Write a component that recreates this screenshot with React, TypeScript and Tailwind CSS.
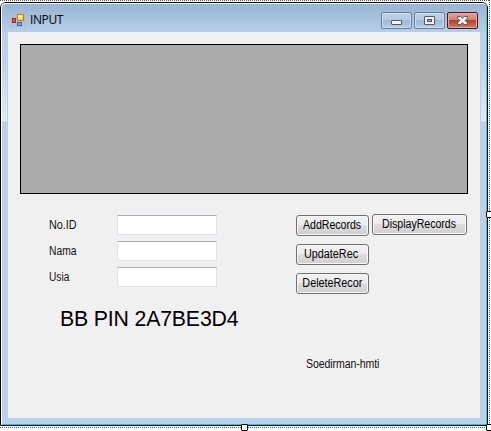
import React from "react";

function WinButton({ label, className, textClass }: { label: string; className: string; textClass: string }) {
  return (
    <button
      className={`flex h-[21px] items-center justify-center whitespace-nowrap rounded-[3px] border border-[#707070] bg-[linear-gradient(to_bottom,#f2f2f2_0%,#ebebeb_48%,#dddddd_50%,#cfcfcf_100%)] text-[12px] leading-[19px] shadow-[inset_0_0_0_1px_#f8f8f8] ${className}`}
    >
      <span className={`inline-block ${textClass}`}>{label}</span>
    </button>
  );
}

function Field({ label, textClass }: { label: string; textClass: string }) {
  return (
    <label className="flex h-5 items-center">
      <span className={`w-[68px] origin-left text-[12px] leading-5 text-[#111] ${textClass}`}>{label}</span>
      <input className="h-5 w-[100px] rounded-[1px] border border-[#e2e3ea] border-t-[#abadb3] bg-white" />
    </label>
  );
}

function AppIcon() {
  return (
    <svg width="14" height="14" viewBox="0 0 14 14" className="shrink-0">
      <path d="M.5 .5h13v13H.5z" fill="none" stroke="#b5b8bd" strokeOpacity=".8" />
      <path d="M5.5 .5v13M.5 8.5h13" stroke="#b5b8bd" />
      <rect x="6.5" y="1.5" width="6" height="6" fill="#fbd04c" stroke="#b8841c" />
      <path d="M7 2h4v3H7z" fill="#ffeb9c" />
      <rect x="1.5" y="5.5" width="3" height="4" fill="#e66049" stroke="#9d2418" />
      <rect x="6.5" y="9.5" width="4" height="3" fill="#73a8f0" stroke="#3869bd" />
    </svg>
  );
}

function CaptionButtons() {
  return (
    <svg width="98" height="18" viewBox="0 0 98 18">
      <defs>
        <linearGradient id="glass" x1="0" y1="0" x2="0" y2="1">
          <stop offset="0" stopColor="#bdd1e8" />
          <stop offset=".47" stopColor="#b3cae3" />
          <stop offset=".5" stopColor="#9bb8d6" />
          <stop offset="1" stopColor="#b5cfea" />
        </linearGradient>
        <linearGradient id="close" x1="0" y1="0" x2="0" y2="1">
          <stop offset="0" stopColor="#e3a99f" />
          <stop offset=".47" stopColor="#d47f70" />
          <stop offset=".5" stopColor="#b83c24" />
          <stop offset="1" stopColor="#d38471" />
        </linearGradient>
      </defs>
      <rect x=".5" y=".5" width="30" height="16" rx="1.5" fill="url(#glass)" stroke="#687c9c" />
      <rect x="1.5" y="1.5" width="28" height="14" rx="1" fill="none" stroke="#cfdeef" />
      <rect x="33.5" y=".5" width="30" height="16" rx="1.5" fill="url(#glass)" stroke="#687c9c" />
      <rect x="34.5" y="1.5" width="28" height="14" rx="1" fill="none" stroke="#cfdeef" />
      <rect x="66.5" y=".5" width="30" height="16" rx="1.5" fill="url(#close)" stroke="#49172a" />
      <rect x="67.5" y="1.5" width="28" height="14" rx="1" fill="none" stroke="#e3aaa0" />
      <rect x="10.5" y="8.5" width="10" height="4" rx=".5" fill="#f4f4f4" stroke="#535666" />
      <rect x="43.5" y="4.5" width="10" height="8" rx=".5" fill="#f4f4f4" stroke="#535666" />
      <rect x="46.5" y="7.5" width="4" height="2" fill="#8db1d6" stroke="#535666" />
      <path d="M76.5 4.5h3.2l1.8 1.7 1.8-1.7h3.2v1.6L84.2 8.500l2.3 2.4v1.600h-3.200l-1.800-1.700-1.800 1.700h-3.200v-1.600l2.300-2.400-2.300-2.400z" fill="#f4f4f4" stroke="#535666" />
    </svg>
  );
}

export default function App() {
  return (
    <div className="relative h-[431px] w-[491px] overflow-hidden bg-white pt-[2px] font-['Liberation_Sans',Arial,sans-serif] text-black">
      <div className="h-[424px] w-[488px] rounded-t-[6px] border border-black">
        <div className="h-full w-full rounded-t-[5px] border-b border-l border-r border-t border-b-[#1fc8e0] border-l-white border-r-[#28cfe8] border-t-white bg-[linear-gradient(to_bottom,#98b4d2_0,#b9d1ea_30px,#bad2eb_55px,#dfebf7_116px,#dfebf7_117px,#b9d1ea_118px)]">
          <div className="flex h-full w-full flex-col px-[5px] pb-[6px]">
            <header className="flex h-[28px] shrink-0 items-start">
              <div className="flex pl-[4px] pt-[9px]">
                <AppIcon />
                <span className="ml-[5px] font-['Open_Sans',sans-serif] text-[12px] leading-[14px] tracking-[-0.4px]">INPUT</span>
              </div>
              <div className="ml-auto mr-[2px] pt-[8px]">
                <CaptionButtons />
              </div>
            </header>
            <main className="min-h-0 grow border-x border-[#b9d1ea] bg-[#f0f0f0] pl-[12px] pt-[12px]">
              <div className="h-[150px] w-[448px] border border-black bg-[#ababab]" />
              <div className="flex pt-[20px]">
                <div className="w-[276px]">
                  <div className="flex flex-col gap-[6px] pl-[29px] pt-[1px]">
                    <Field label="No.ID" textClass="scale-x-[0.9]" />
                    <Field label="Nama" textClass="scale-x-[0.86]" />
                    <Field label="Usia" textClass="scale-x-[0.85]" />
                  </div>
                  <div className="whitespace-nowrap pl-[40px] pt-[20px] text-[21.3px] leading-6 tracking-[-0.18px]">BB PIN 2A7BE3D4</div>
                </div>
                <div>
                  <div className="flex gap-[3px]">
                    <WinButton label="AddRecords" className="mt-[1px] w-[73px]" textClass="scale-x-[0.88]" />
                    <WinButton label="DisplayRecords" className="w-[95px]" textClass="scale-x-[0.88]" />
                  </div>
                  <WinButton label="UpdateRec" className="mt-[8px] w-[73px] pr-[3px]" textClass="scale-x-[0.9]" />
                  <WinButton label="DeleteRecor" className="mt-[8px] w-[73px]" textClass="scale-x-[0.9]" />
                  <div className="w-[120px] origin-left scale-x-[0.88] translate-x-[10px] pt-[62px] text-[12px] leading-4 tracking-[-0.1px] text-[#111]">Soedirman-hmti</div>
                </div>
              </div>
            </main>
          </div>
        </div>
      </div>

      {/* designer selection frame and its resize handles */}
      <div className="absolute left-0 top-0 h-px w-[490px] bg-[repeating-linear-gradient(to_right,#555_0_1px,#fff_1px_2px)]" />
      <div className="absolute left-0 top-[427px] h-px w-[490px] bg-[repeating-linear-gradient(to_right,#555_0_1px,#fff_1px_2px)]" />
      <div className="absolute left-[489px] top-0 h-[428px] w-px bg-[repeating-linear-gradient(to_bottom,#555_0_1px,#fff_1px_2px)]" />
      <div className="absolute left-[241px] top-[424px] h-[7px] w-[7px] rounded-[1px] border border-black bg-white" />
      <div className="absolute left-[486px] top-[211px] h-[7px] w-[7px] rounded-[1px] border border-black bg-white" />
      <div className="absolute left-[486px] top-[424px] h-[7px] w-[7px] rounded-[1px] border border-black bg-white" />
    </div>
  );
}
